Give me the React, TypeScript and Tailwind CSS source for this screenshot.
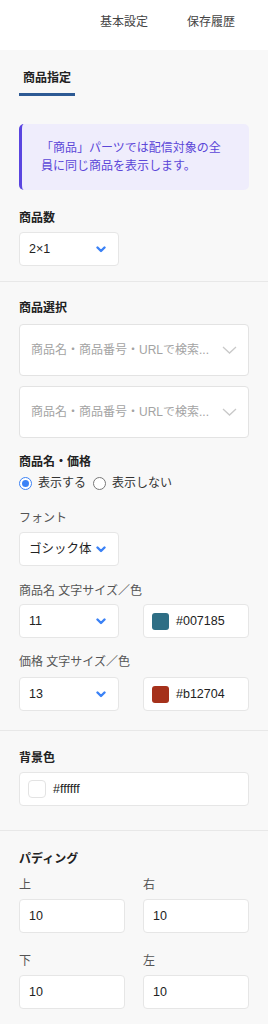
import React from "react";

const BlueChevron = () => (
  <svg width="10" height="7" viewBox="0 0 10 7" className="shrink-0">
    <polyline points="1.5,1.5 5,5 8.5,1.5" fill="none" stroke="#3b82f6" strokeWidth="2.4" strokeLinecap="round" strokeLinejoin="round" />
  </svg>
);

const GrayChevron = () => (
  <svg width="15" height="8" viewBox="0 0 15 8" className="shrink-0">
    <polyline points="1,1 7.5,7 14,1" fill="none" stroke="#c9c9c9" strokeWidth="1.3" />
  </svg>
);

const SmallSelect = ({ value }: { value: string }) => (
  <div className="w-[100px] h-[34px] bg-white border border-[#e6e6e6] rounded-[4px] flex items-center justify-between pl-[9px] pr-[12px] text-[12.5px] text-[#222]">
    <span>{value}</span>
    <BlueChevron />
  </div>
);

const ColorInput = ({ swatch, value, bordered }: { swatch: string; value: string; bordered?: boolean }) => (
  <div className="h-[34px] bg-white border border-[#e6e6e6] rounded-[4px] flex items-center gap-[7px] pl-[8px] text-[12.5px] text-[#222]">
    <span
      className={
        bordered
          ? "w-[18px] h-[18px] rounded-[4px] border border-[#e3e3e3] bg-white"
          : "w-[17px] h-[17px] rounded-[3px]"
      }
      style={bordered ? undefined : { backgroundColor: swatch }}
    />
    <span>{value}</span>
  </div>
);

const TextInput = ({ value }: { value: string }) => (
  <div className="h-[34px] bg-white border border-[#e6e6e6] rounded-[4px] flex items-center pl-[9px] text-[12.5px] text-[#222]">
    {value}
  </div>
);

const SearchSelect = () => (
  <div className="h-[52px] bg-white border border-[#e3e3e3] rounded-[4px] flex items-center justify-between pl-[11px] pr-[11px] text-[12px] text-[#a3a3a3]">
    <span>商品名・商品番号・URLで検索...</span>
    <GrayChevron />
  </div>
);

const BoldLabel = ({ children, className = "" }: { children: React.ReactNode; className?: string }) => (
  <div className={"text-[12px] leading-[16px] font-bold text-[#222] " + className}>{children}</div>
);

const Label = ({ children, className = "" }: { children: React.ReactNode; className?: string }) => (
  <div className={"text-[12px] leading-[16px] text-[#555] " + className}>{children}</div>
);

export default function App() {
  return (
    <div className="w-[268px] min-h-[1024px] bg-[#f8f8f8] font-['Liberation_Sans','Noto_Sans_CJK_JP',sans-serif]">
      <div className="h-[50px] bg-white flex justify-end gap-[39px] pr-[33px] pt-[14px] text-[12px] leading-[16px] text-[#444]">
        <span>基本設定</span>
        <span>保存履歴</span>
      </div>

      <div className="px-[19px] pt-[20px] pb-[15px] border-b border-[#e8e8e8]">
        <div className="w-fit px-[4px] pb-[7px] border-b-[3px] border-[#2d5a94] text-[12px] leading-[16px] font-bold text-[#222]">
          商品指定
        </div>
        <div className="mt-[28px] rounded-[5px] border-l-[3px] border-[#5a45e0] bg-[#efedfc] px-[19px] py-[15px] text-[12px] leading-[18px] text-[#5b46d8]">
          「商品」パーツでは配信対象の全員に同じ商品を表示します。
        </div>
        <BoldLabel className="mt-[20px] mb-[6px]">商品数</BoldLabel>
        <SmallSelect value="2×1" />
      </div>

      <div className="px-[19px] pt-[18px] pb-[19px] border-b border-[#e8e8e8]">
        <BoldLabel className="mb-[8px]">商品選択</BoldLabel>
        <SearchSelect />
        <div className="mt-[10px]">
          <SearchSelect />
        </div>

        <BoldLabel className="mt-[16px]">商品名・価格</BoldLabel>
        <div className="mt-[4px] flex items-center text-[12px] leading-[18px] text-[#333]">
          <span className="w-[13px] h-[13px] rounded-full border-[1.5px] border-[#3b82f6] bg-white flex items-center justify-center">
            <span className="w-[7px] h-[7px] rounded-full bg-[#3b82f6]" />
          </span>
          <span className="ml-[6px]">表示する</span>
          <span className="ml-[7px] w-[13px] h-[13px] rounded-full border border-[#777] bg-white" />
          <span className="ml-[6px]">表示しない</span>
        </div>

        <Label className="mt-[18px] mb-[6px]">フォント</Label>
        <SmallSelect value="ゴシック体" />

        <Label className="mt-[17px] mb-[5px]">商品名 文字サイズ／色</Label>
        <div className="grid grid-cols-2 gap-x-[18px]">
          <SmallSelect value="11" />
          <ColorInput swatch="#2e6e85" value="#007185" />
        </div>

        <Label className="mt-[16px] mb-[7px]">価格 文字サイズ／色</Label>
        <div className="grid grid-cols-2 gap-x-[18px]">
          <SmallSelect value="13" />
          <ColorInput swatch="#a5311b" value="#b12704" />
        </div>
      </div>

      <div className="px-[19px] pt-[19px] pb-[24px] border-b border-[#e8e8e8]">
        <BoldLabel className="mb-[6px]">背景色</BoldLabel>
        <ColorInput swatch="#ffffff" value="#ffffff" bordered />
      </div>

      <div className="px-[19px] pt-[20px] pb-[14px]">
        <BoldLabel>パディング</BoldLabel>
        <div className="grid grid-cols-2 gap-x-[18px]">
          <div>
            <Label className="mt-[10px] mb-[6px]">上</Label>
            <TextInput value="10" />
          </div>
          <div>
            <Label className="mt-[10px] mb-[6px]">右</Label>
            <TextInput value="10" />
          </div>
          <div>
            <Label className="mt-[20px] mb-[6px]">下</Label>
            <TextInput value="10" />
          </div>
          <div>
            <Label className="mt-[20px] mb-[6px]">左</Label>
            <TextInput value="10" />
          </div>
        </div>
      </div>
    </div>
  );
}
